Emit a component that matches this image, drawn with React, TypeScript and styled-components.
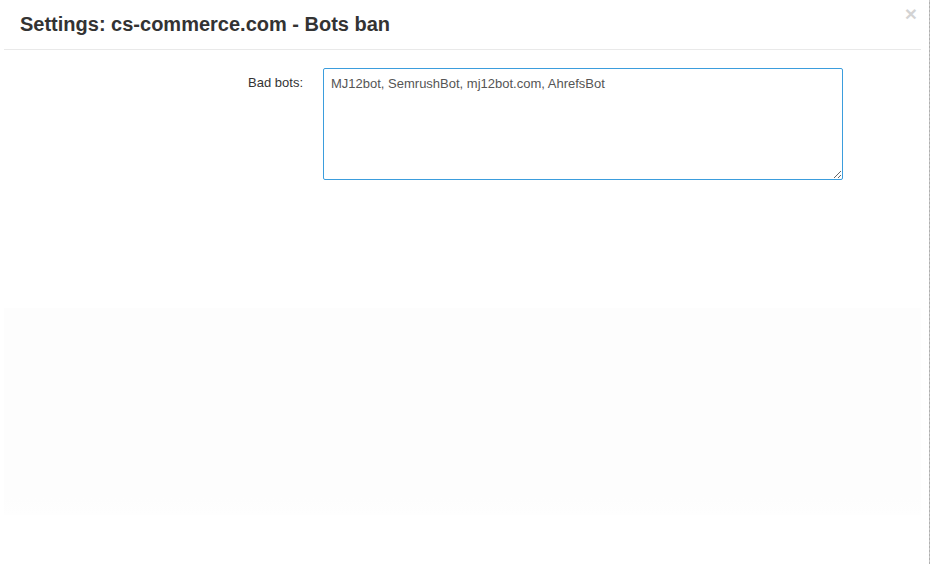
import React from "react";
import styled, { createGlobalStyle } from "styled-components";

const Global = createGlobalStyle`
  html, body { margin: 0; padding: 0; background: #fff; }
  body { font-family: "Liberation Sans", Arial, sans-serif; color: #333; }
  #root { height: 564px; }
`;

const Page = styled.div`
  position: relative;
  width: 931px;
  height: 564px;
  box-sizing: border-box;
  display: flex;
  padding: 0 10px 0 4px;
`;

const EdgeLine = styled.div`
  position: absolute;
  top: 0;
  right: 1px;
  width: 1px;
  height: 100%;
  background: repeating-linear-gradient(to bottom, #c8c8c8 0 2px, #b0b0b0 2px 4px);
`;

const Modal = styled.div`
  flex: 1;
  display: flex;
  flex-direction: column;
`;

const Header = styled.div`
  position: relative;
  height: 50px;
  box-sizing: border-box;
  padding: 11px 16px 0;
  border-bottom: 1px solid #e9e9e9;
`;

const Title = styled.h4`
  margin: 0;
  font-size: 20px;
  font-weight: bold;
  line-height: 26px;
  color: #333;
`;

const Close = styled.span`
  position: absolute;
  top: 3px;
  right: 4px;
  font-size: 21px;
  font-weight: bold;
  line-height: 22px;
  color: #000;
  opacity: 0.17;
`;

const Body = styled.div`
  padding: 18px 0 0;
  height: 258px;
  box-sizing: border-box;
`;

const Row = styled.div`
  display: grid;
  grid-template-columns: 299px 520px;
  column-gap: 20px;
`;

const Label = styled.label`
  text-align: right;
  font-size: 13px;
  color: #333;
  padding-top: 7px;
`;

const Area = styled.textarea`
  width: 520px;
  height: 112px;
  box-sizing: border-box;
  border: 1px solid #3b9ddd;
  border-radius: 2px;
  padding: 6px 7px;
  font-family: "Liberation Sans", Arial, sans-serif;
  font-size: 13px;
  line-height: 18px;
  color: #555;
  outline: none;
  resize: vertical;
`;

const Faint = styled.div`
  height: 207px;
  background: linear-gradient(to bottom, #fdfdfd 0, #fdfdfd 190px, #fefefe 207px);
`;

export default function App() {
  return (
    <>
      <Global />
      <Page>
        <Modal>
          <Header>
            <Title>Settings: cs-commerce.com - Bots ban</Title>
            <Close>×</Close>
          </Header>
          <Body>
            <Row>
              <Label>Bad bots:</Label>
              <Area defaultValue="MJ12bot, SemrushBot, mj12bot.com, AhrefsBot" />
            </Row>
          </Body>
          <Faint />
        </Modal>
        <EdgeLine />
      </Page>
    </>
  );
}
